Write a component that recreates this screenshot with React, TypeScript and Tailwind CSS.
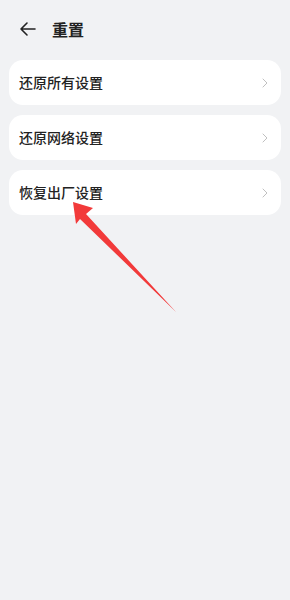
import { ChevronRight } from "lucide-react";

const items = ["还原所有设置", "还原网络设置", "恢复出厂设置"];

export default function App() {
  return (
    <div
      className="relative w-[290px] h-[600px] bg-[#f1f2f4] overflow-hidden"
      style={{ fontFamily: '"Noto Sans CJK SC", "Noto Sans", sans-serif' }}
    >
      {/* Header */}
      <div className="flex items-center h-[60px] px-[18px] pb-[2px]">
        <svg width="20" height="20" viewBox="0 0 20 20" className="text-[#222]">
          <path d="M17 10H3M9 4L3 10L9 16" fill="none" stroke="currentColor" strokeWidth="1.6" strokeLinecap="round" strokeLinejoin="round" />
        </svg>
        <span className="ml-[14px] text-[16px] font-semibold text-[#222]">重置</span>
      </div>

      {/* List */}
      <div className="flex flex-col gap-[10px] px-[9px]">
        {items.map((t) => (
          <div key={t} className="flex items-center justify-between h-[45px] bg-white rounded-[14px] pl-[10px] pr-[8px]">
            <span className="text-[14px] font-medium text-[#222]">{t}</span>
            <ChevronRight className="w-[16px] h-[16px] text-[#c0c0c0]" strokeWidth={1.5} />
          </div>
        ))}
      </div>

      {/* Red annotation arrow */}
      <svg className="absolute left-0 top-0 pointer-events-none" width="290" height="600" viewBox="0 0 290 600">
        <polygon points="73,202 93,208 86,214 176,312 80,219 76,224" fill="#f23a3a" />
      </svg>
    </div>
  );
}
